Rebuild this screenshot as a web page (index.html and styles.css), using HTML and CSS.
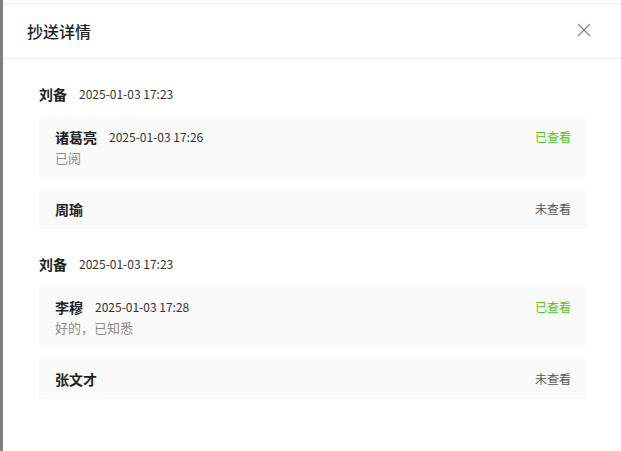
FILE: index.html
```html
<!DOCTYPE html>
<html lang="zh-CN">
<head>
	<meta charset="UTF-8">
	<title>抄送详情</title>
	<link rel="stylesheet" href="styles.css">
</head>
<body>
	<div class="page">
		<div class="mask"></div>
		<div class="drawer">
			<div class="drawer-head">
				<h2 class="title">抄送详情</h2>
				<span class="close">
					<svg width="14" height="14" viewBox="0 0 14 14"><path d="M1 1L13 13M13 1L1 13" stroke="#8c8c8c" stroke-width="1.3" fill="none"/></svg>
				</span>
			</div>
			<div class="drawer-body">
				<div class="group">
					<div class="sender"><b>刘备</b><span class="time">2025-01-03 17:23</span></div>
					<div class="card">
						<div class="card-main">
							<div class="line"><b>诸葛亮</b><span class="time">2025-01-03 17:26</span></div>
							<div class="note">已阅</div>
						</div>
						<span class="status read">已查看</span>
					</div>
					<div class="card">
						<div class="card-main">
							<div class="line"><b>周瑜</b></div>
						</div>
						<span class="status">未查看</span>
					</div>
				</div>
				<div class="group">
					<div class="sender"><b>刘备</b><span class="time">2025-01-03 17:23</span></div>
					<div class="card">
						<div class="card-main">
							<div class="line"><b>李穆</b><span class="time">2025-01-03 17:28</span></div>
							<div class="note">好的，已知悉</div>
						</div>
						<span class="status read">已查看</span>
					</div>
					<div class="card">
						<div class="card-main">
							<div class="line"><b>张文才</b></div>
						</div>
						<span class="status">未查看</span>
					</div>
				</div>
			</div>
		</div>
	</div>
</body>
</html>
```
FILE: styles.css
```css
*{
	margin: 0;
	padding: 0;
	box-sizing: border-box;
}
body{
	font-family: "Noto Sans CJK SC", "Noto Sans", sans-serif;
	color: #1f1f1f;
	background: #fff;
}
.page{
	display: flex;
	height: 451px;
}
.mask{
	width: 3px;
	background: #7f7f7f;
}
.drawer{
	flex: 1;
	padding-top: 3px;
	display: flex;
	flex-direction: column;
}
.drawer-head{
	height: 56px;
	border-top: 1px solid #f0f0f0;
	border-bottom: 1px solid #f0f0f0;
	display: flex;
	align-items: center;
	justify-content: space-between;
	padding: 0 30px 0 24px;
}
.title{
	font-size: 16px;
	font-weight: 500;
	line-height: 24px;
	color: #1f1f1f;
}
.close{
	display: flex;
	width: 14px;
	height: 14px;
	margin-top: -2px;
}
.drawer-body{
	padding: 0 34px 0 36px;
}
.group{
	padding-top: 24px;
}
.sender{
	line-height: 22px;
	margin-bottom: 12px;
	display: flex;
	align-items: center;
}
.sender b, .line b{
	font-weight: 700;
	font-size: 14px;
	color: #1f1f1f;
}
.time{
	font-size: 12px;
	color: #333;
	margin-left: 12px;
}
.card{
	background: #fafafa;
	border-radius: 2px;
	padding: 9px 16px;
	display: flex;
	justify-content: space-between;
	align-items: flex-start;
	margin-bottom: 12px;
}
.card:last-child{
	margin-bottom: 0;
}
.line{
	display: flex;
	align-items: center;
	line-height: 22px;
}
.note{
	font-size: 13px;
	line-height: 20px;
	color: #8c8c8c;
}
.status{
	font-size: 12px;
	line-height: 22px;
	color: #555;
}
.status.read{
	color: #52c41a;
}
```
